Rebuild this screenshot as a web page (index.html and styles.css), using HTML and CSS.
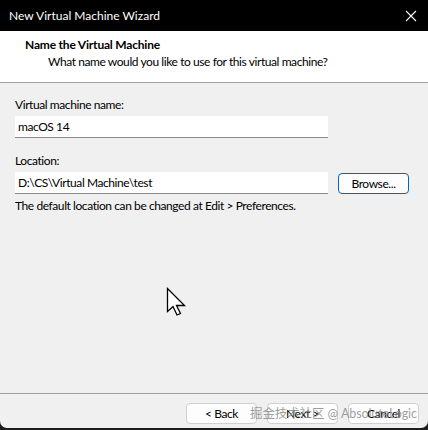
FILE: index.html
```html
<!DOCTYPE html>
<html>
<head>
<meta charset="utf-8">
<link rel="stylesheet" href="styles.css">
</head>
<body>
<div class="window">
  <div class="titlebar">
    <span class="title">New Virtual Machine Wizard</span>
    <svg class="close" width="12" height="12" viewBox="0 0 12 12"><path d="M1 1L11 11M11 1L1 11" stroke="#fff" stroke-width="1.1"/></svg>
  </div>
  <div class="header">
    <div class="h-title">Name the Virtual Machine</div>
    <div class="h-sub">What name would you like to use for this virtual machine?</div>
  </div>
  <div class="body">
    <div class="label">Virtual machine name:</div>
    <div class="row"><div class="input">macOS 14</div></div>
    <div class="label loc">Location:</div>
    <div class="row"><div class="input">D:\CS\Virtual Machine\test</div><div class="btn browse">Browse...</div></div>
    <div class="note">The default location can be changed at Edit &gt; Preferences.</div>
  </div>
  <div class="footer">
    <div class="btn">&lt; Back</div>
    <div class="btn">Next &gt;</div>
    <div class="btn">Cancel</div>
  </div>
  <div class="watermark">掘金技术社区 @ AbsoluteLogic</div>
  <svg class="cursor" width="22" height="30" viewBox="0 0 22 30"><path d="M1.5 1.5V24.5L7 19.5L11 28L14.5 26.5L10.5 18.5H18.5Z" fill="#fff" stroke="#000" stroke-width="1.3" stroke-linejoin="miter"/></svg>
</div>
</body>
</html>
```
FILE: styles.css
```css
html, body { margin: 0; padding: 0; }
body { background: #1c1c1c; width: 428px; height: 430px; overflow: hidden; font-family: "Segoe UI", Lato, "Liberation Sans", sans-serif; font-size: 12px; color: #000; }
.window { position: relative; width: 428px; height: 428px; background: #f0f0f0; border-radius: 0 0 7px 7px; overflow: hidden; display: flex; flex-direction: column; letter-spacing: -0.42px; }
.titlebar { height: 31px; background: #000; color: #fff; display: flex; align-items: center; justify-content: space-between; padding: 0 10px 0 9px; box-sizing: border-box; }
.title { font-size: 12px; letter-spacing: 0; }
.close { display: block; margin-right: 1px; }
.header { height: 52px; background: #fff; border-bottom: 1px solid #a0a0a0; box-sizing: border-box; padding: 6px 0 0 25px; }
.h-title { font-weight: bold; line-height: 16px; letter-spacing: -0.2px; }
.h-sub { padding-left: 23px; line-height: 17px; }
.body { flex: 1; padding: 14px 0 0 15px; border-bottom: 1px solid #a0a0a0; }
.label { line-height: 16px; }
.label.loc { margin-top: 15px; }
.row { display: flex; align-items: center; margin-top: 3px; }
.input { width: 313px; height: 22px; box-sizing: border-box; background: #fff; border-bottom: 1px solid #8a8a8a; padding: 2px 0 0 3px; line-height: 17px; }
.btn { width: 71px; height: 21px; box-sizing: border-box; border: 1px solid #d0d0d0; border-radius: 4px; background: #fdfdfd; text-align: center; line-height: 19px; }
.browse { margin-left: 10px; border-color: #0067c0; }
.note { margin-top: 4px; line-height: 16px; }
.footer { height: 34px; display: flex; justify-content: flex-end; gap: 10px; padding: 9px 9px 0 0; box-sizing: border-box; }
.watermark { position: absolute; left: 250px; top: 403px; font-family: Lato, "Noto Sans CJK SC", sans-serif; font-size: 12.5px; letter-spacing: -0.1px; white-space: nowrap; color: rgba(140,140,140,0.85); pointer-events: none; }
.cursor { position: absolute; left: 166px; top: 287px; }
```
